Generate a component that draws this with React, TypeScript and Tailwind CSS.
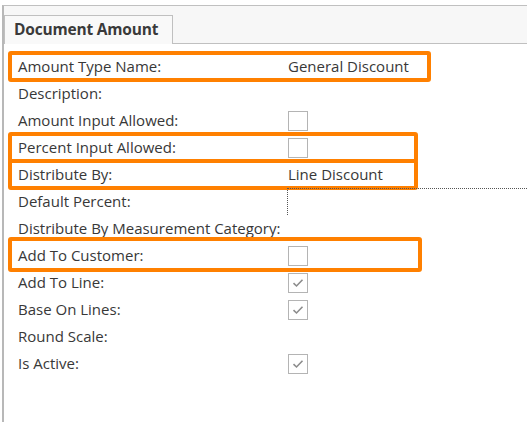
import React from "react";

type Row = {
    label: string;
    value?: string;
    check?: "on" | "off";
    input?: boolean;
    mark?: number; // width of orange highlight
    tall?: boolean;
};

const rows: Row[] = [
    { label: "Amount Type Name:", value: "General Discount", mark: 423 },
    { label: "Description:" },
    { label: "Amount Input Allowed:", check: "off" },
    { label: "Percent Input Allowed:", check: "off", mark: 410 },
    { label: "Distribute By:", value: "Line Discount", mark: 410 },
    { label: "Default Percent:", input: true },
    { label: "Distribute By Measurement Category:" },
    { label: "Add To Customer:", check: "off", mark: 414, tall: true },
    { label: "Add To Line:", check: "on" },
    { label: "Base On Lines:", check: "on" },
    { label: "Round Scale:" },
    { label: "Is Active:", check: "on" },
];

const CheckBox = ({ on }: { on: boolean }) => (
    <div className="w-[20px] h-[20px] border border-[#b4b4b4] bg-white flex items-center justify-center">
        {on && (
            <svg width="12" height="10" viewBox="0 0 12 10">
                <path d="M1.5 5.2 L4.5 8 L10.5 1.8" fill="none" stroke="#8c8c8c" strokeWidth="1.6" />
            </svg>
        )}
    </div>
);

export default function App() {
    return (
        <div
            className="w-[527px] h-[422px] bg-white overflow-hidden pl-[2px] pt-[5px]"
            style={{ fontFamily: '"Open Sans", "Noto Sans", sans-serif' }}
        >
            <div className="h-full border-l-2 border-t border-[#b8b8b8] border-t-[#c0c0c0] flex flex-col">
                {/* tab strip */}
                <div className="h-[38px] bg-[#f7f7f7] flex items-end shrink-0">
                    <div className="h-[29px] w-[169px] border border-b-0 border-[#c0c0c0] bg-[#f9f9f9] pl-[9px] flex items-center text-[15.5px] font-bold text-[#3a3a3a] tracking-[-0.2px] whitespace-nowrap">
                        Document Amount
                    </div>
                    <div className="flex-1 border-b border-[#c0c0c0]" />
                </div>

                {/* form rows */}
                <div className="flex flex-col pt-[9px]">
                    {rows.map((r, i) => (
                        <div key={i} className="relative h-[27px] flex items-center text-[15px] text-[#383838] whitespace-nowrap">
                            <span className="w-[270px] pl-[14px] shrink-0">{r.label}</span>
                            {r.value && <span className="pl-[14px]">{r.value}</span>}
                            {r.check && (
                                <div className="pl-[14px]">
                                    <CheckBox on={r.check === "on"} />
                                </div>
                            )}
                            {r.input && (
                                <div className="self-start ml-[13px] flex-1 h-[27px] border-t border-l border-dotted border-[#555]" />
                            )}
                            {r.mark && (
                                <div
                                    className={`absolute left-[4px] border-[4px] border-[#ff8000] rounded-[3px] pointer-events-none ${r.tall ? "top-[-5px] bottom-[-3px]" : "top-[-2px] bottom-[-2px]"}`}
                                    style={{ width: r.mark }}
                                />
                            )}
                        </div>
                    ))}
                </div>
            </div>
        </div>
    );
}
